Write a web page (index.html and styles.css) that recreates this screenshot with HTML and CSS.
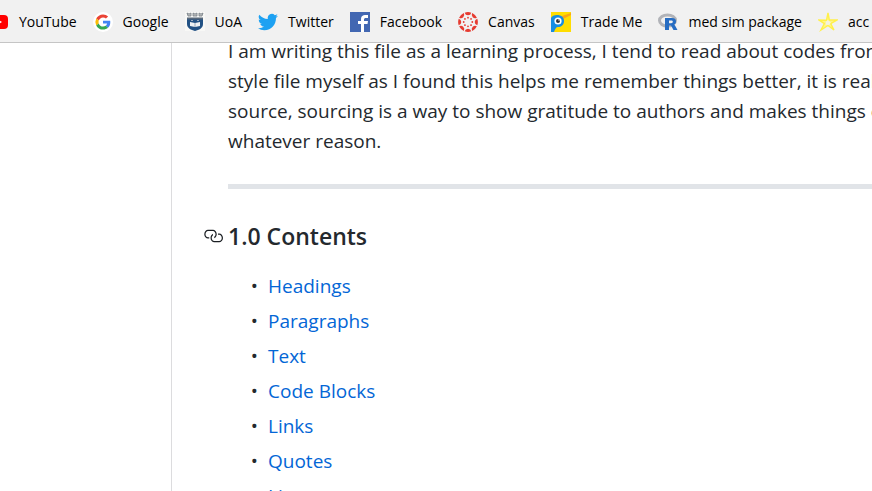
FILE: index.html
```html
<!DOCTYPE html>
<html lang="en">
<head>
<meta charset="utf-8">
<title>Markdown notes</title>
<link rel="stylesheet" href="styles.css">
</head>
<body>
<nav class="bookmarks" aria-label="Bookmarks">
  <a class="bookmark" href="#youtube">
    <svg class="icon" viewBox="0 0 20 20" aria-hidden="true"><rect y="3" width="19" height="14" rx="4" fill="#f00"/><path d="M8 7l5 3-5 3z" fill="#fff"/></svg>
    YouTube</a>
  <a class="bookmark" href="#google">
    <svg class="icon" viewBox="0 0 20 20" aria-hidden="true"><circle cx="10" cy="10" r="10" fill="#fff"/><g transform="translate(2.4 2.4) scale(.317)"><path fill="#ea4335" d="M24 9.500c3.540 0 6.710 1.220 9.210 3.600l6.850-6.850C35.900 2.380 30.470 0 24 0 14.620 0 6.510 5.380 2.560 13.220l7.980 6.190C12.430 13.720 17.740 9.500 24 9.500z"/><path fill="#4285f4" d="M46.980 24.550c0-1.570-.15-3.090-.38-4.550H24v9.020h12.940c-.58 2.960-2.260 5.480-4.780 7.180l7.730 6c4.510-4.180 7.090-10.360 7.090-17.650z"/><path fill="#fbbc05" d="M10.530 28.590a14.500 14.500 0 010-9.180l-7.980-6.190a24 24 0 000 21.560z"/><path fill="#34a853" d="M24 48c6.480 0 11.930-2.130 15.890-5.810l-7.730-6c-2.150 1.450-4.920 2.300-8.160 2.300-6.260 0-11.570-4.220-13.470-9.910l-7.980 6.190C6.510 42.620 14.620 48 24 48z"/></g></svg>
    Google</a>
  <a class="bookmark" href="#uoa">
    <svg class="icon" viewBox="0 0 20 20" aria-hidden="true"><path d="M0 0h20v19H0z" fill="#f8f8f6"/><path d="M2 6h16v6c0 4-4 6-8 7-4-1-8-3-8-7z" fill="#225184"/><path d="M2 6.500h16" stroke="#59697b" stroke-width="2"/><path d="M2 1l2 1 2-1v3H3zm6 0l2 1 2-1v3H8zm6 0l2 1 2-1-1 3h-3z" fill="#b9bcbd" stroke="#777f87" stroke-width=".8"/><path d="M5 10l5 1 5-1v4l-5 1-5-1z" fill="#eef1f4"/><path d="M10 11v4M6 8.500h2m4 0h2" stroke="#9aaabd"/></svg>
    UoA</a>
  <a class="bookmark" href="#twitter">
    <svg class="icon" viewBox="0 0 24 24" aria-hidden="true"><path fill="#1da1f2" d="M23.950 4.570a10 10 0 01-2.820.77 4.960 4.960 0 002.160-2.720c-.95.550-2 .95-3.130 1.180a4.920 4.920 0 00-8.380 4.480C7.690 8.090 4.070 6.130 1.640 3.160a4.920 4.920 0 001.520 6.570 4.900 4.900 0 01-2.230-.61v.06a4.920 4.920 0 003.950 4.830 5 5 0 01-2.210.08 4.940 4.940 0 004.600 3.420A9.870 9.870 0 010 19.540a14 14 0 007.550 2.210c9.140 0 14.310-7.720 13.990-14.640a10 10 0 002.410-2.540z"/></svg>
    Twitter</a>
  <a class="bookmark" href="#facebook">
    <svg class="icon" viewBox="0 0 20 20" aria-hidden="true"><path fill="#4267b2" d="M0 0h20v20H0z"/><path fill="#fff" d="M11 20v-8H8V9h3V7c0-3 2-4 4-4h3v3h-2c-1.500 0-2 .6-2 1.700V9h4l-.5 3H14v8z"/></svg>
    Facebook</a>
  <a class="bookmark" href="#canvas">
    <svg class="icon" viewBox="0 0 20 20" aria-hidden="true"><g fill="#e63b30"><g id="canvas-mark"><path d="M6.700.7a10 10 0 016.600 0 3.400 3.400 0 01-6.600 0z"/><circle cx="10" cy="5.700" r=".9"/><path d="M6.700 19.300a10 10 0 006.600 0 3.400 3.400 0 00-6.600 0z"/><circle cx="10" cy="14.300" r=".9"/></g><use href="#canvas-mark" transform="rotate(45 10 10)"/><use href="#canvas-mark" transform="rotate(90 10 10)"/><use href="#canvas-mark" transform="rotate(135 10 10)"/></g></svg>
    Canvas</a>
  <a class="bookmark" href="#trademe">
    <svg class="icon" viewBox="0 0 20 20" aria-hidden="true"><path fill="#fd0" d="M0 0h20v20H0z"/><path fill="#f9a51a" d="M11 4l9-3v2l-8 4z"/><path fill="#168de2" d="M0 6c1-2 3-3 6-3 4 0 7 2 7 6s-3 6-6 6c-2 0-3 2-4 5H0z"/><circle cx="7" cy="9" r="3.600" fill="#fff"/><circle cx="7" cy="9" r="2" fill="#30343b"/><circle cx="8" cy="8" r=".7" fill="#fff"/></svg>
    Trade Me</a>
  <a class="bookmark" href="#medsim">
    <svg class="icon" viewBox="0 0 20 20" aria-hidden="true"><ellipse cx="9.500" cy="8.500" rx="8" ry="5.500" fill="none" stroke="#b1b3b8" stroke-width="3"/><path fill="#276dc3" fill-rule="evenodd" d="M7 6h7c3 0 4 1.300 4 3.500 0 1.700-.8 2.700-2 3.100l1 .9 2.500 4.500h-4L13 13.500h-2V18H7zm4 2.500v2.700h2.200c1.200 0 1.600-.5 1.600-1.400 0-.8-.5-1.300-1.600-1.300z"/></svg>
    med sim package</a>
  <a class="bookmark" href="#acc">
    <svg class="icon" viewBox="0 0 20 20" aria-hidden="true"><path d="M10 1l1.300 7L19 8l-6.300 3.600L16 18l-6-4.500L3 18l3.400-6.400L1 8l7.500.2z" fill="#fff58a" stroke="#fff04a" stroke-width="1.400"/><path d="M9.800 8l3 2.500-1.500 2.500-3.600-.2.200-3z" fill="#f4f2df"/></svg>
    acc</a>
</nav>
<main class="page">
  <article class="readme">
    <p class="intro">I am writing this file as a learning process, I tend to read about codes from<br>
      style file myself as I found this helps me remember things better, it is really<br>
      source, sourcing is a way to show gratitude to authors and makes things e<br>
      whatever reason.</p>
    <hr class="rule">
    <h3 class="heading" id="contents">
      <a class="anchor" href="#contents" aria-label="Link to 1.0 Contents"><svg class="anchor-icon" viewBox="0 0 16 16" aria-hidden="true"><path fill="currentColor" fill-rule="evenodd" d="M4 9h1v1H4c-1.500 0-3-1.690-3-3.500S2.550 3 4 3h4c1.450 0 3 1.690 3 3.500 0 1.410-.91 2.720-2 3.250V8.590c.58-.45 1-1.270 1-2.090C10 5.220 8.980 4 8 4H4c-.98 0-2 1.220-2 2.500S3 9 4 9zm9-3h-1v1h1c1 0 2 1.220 2 2.500S13.980 12 13 12H9c-.98 0-2-1.220-2-2.500 0-.83.42-1.640 1-2.090V6.250c-1.090.53-2 1.840-2 3.250C6 11.310 7.550 13 9 13h4c1.450 0 3-1.690 3-3.500S14.500 6 13 6z"/></svg></a>1.0 Contents</h3>
    <ul class="contents">
      <li><a href="#headings">Headings</a></li>
      <li><a href="#paragraphs">Paragraphs</a></li>
      <li><a href="#text">Text</a></li>
      <li><a href="#code-blocks">Code Blocks</a></li>
      <li><a href="#links">Links</a></li>
      <li><a href="#quotes">Quotes</a></li>
      <li><a href="#lines">Lines</a></li>
    </ul>
  </article>
</main>
</body>
</html>
```
FILE: styles.css
```css
* {
  box-sizing: border-box;
}

body {
  display: flex;
  flex-direction: column;
  height: 100vh;
  margin: 0;
  overflow: hidden;
  background: #fff;
  color: #24292e;
  font-family: "Segoe UI", "Open Sans", sans-serif;
  font-size: 19px;
  line-height: 30px;
}

a {
  color: #0366d6;
  text-decoration: none;
}

.bookmarks {
  display: flex;
  flex: none;
  gap: 16px;
  margin-left: -11px;
  padding: 7px 0 5px;
  border-bottom: 1px solid #c5c5c5;
  background: #f1f1f1;
  white-space: nowrap;
}

.bookmark {
  display: flex;
  flex: none;
  align-items: center;
  gap: 10px;
  color: #000;
  font-size: 14px;
}

.icon {
  flex: none;
  width: 20px;
  height: 20px;
}

.page {
  flex: 1;
  min-height: 0;
  margin-left: 171px;
  padding-left: 56px;
  border-left: 1px solid #dcdcde;
  overflow: hidden;
}

/* The page is scrolled part-way through the first line. */
.readme {
  margin-top: -7px;
}

.intro {
  margin: 0;
  white-space: nowrap;
}

.rule {
  height: 5px;
  margin: 28px 0 30px;
  border: 0;
  background: #e1e4e8;
}

.heading {
  display: flex;
  align-items: center;
  margin: 0 0 18px -25px;
  font-size: 23px;
  font-weight: 600;
  line-height: 34px;
}

.anchor {
  display: flex;
  width: 25px;
  color: #1b1f23;
}

.anchor-icon {
  width: 20px;
  height: 20px;
}

.contents {
  margin: 0;
  padding-left: 30px;
  list-style-type: "•";
}

.contents li {
  padding-left: 10px;
}

.contents li + li {
  margin-top: 5px;
}
```
